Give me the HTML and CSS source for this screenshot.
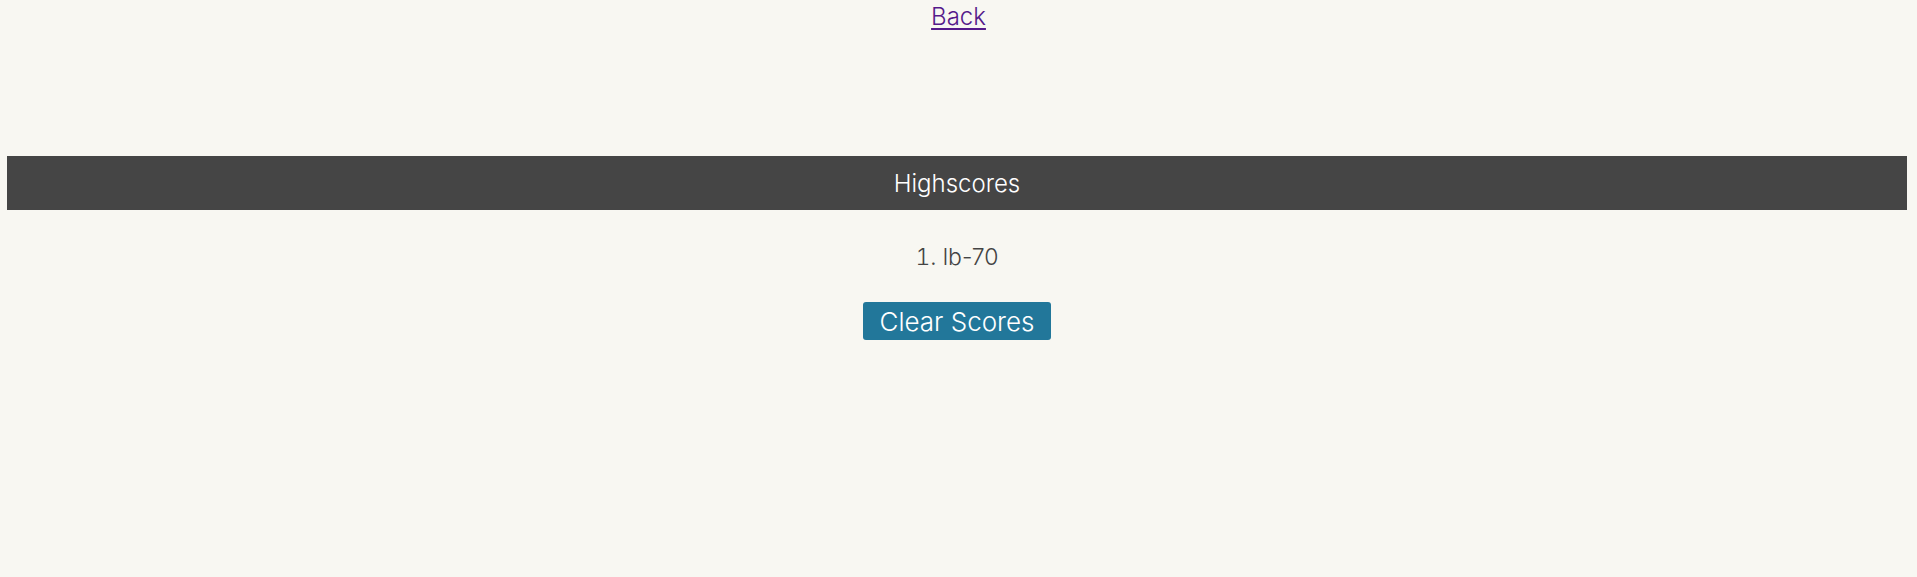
FILE: index.html
```html
<!DOCTYPE html>
<html lang="en">
<head>
<meta charset="utf-8">
<title>Highscores</title>
<link rel="stylesheet" href="styles.css">
</head>
<body>
<header class="top">
  <a class="back" href="#">Back</a>
</header>
<main class="scores">
  <h1 class="bar">Highscores</h1>
  <ol class="list">
    <li>lb-70</li>
  </ol>
  <button class="clear" type="button">Clear Scores</button>
</main>
</body>
</html>
```
FILE: styles.css
```css
html, body {
  margin: 0;
  padding: 0;
  background: #f8f7f2;
  font-family: Inter, "Open Sans", sans-serif;
  font-weight: 300;
}
.top {
  display: flex;
  justify-content: center;
  height: 156px;
}
.back {
  color: #551a8b;
  font-size: 24px;
  line-height: 33px;
  text-decoration-thickness: 2px;
  text-underline-offset: 3px;
}
.scores {
  display: flex;
  flex-direction: column;
  align-items: center;
  padding: 0 10px 0 7px;
}
.bar {
  align-self: stretch;
  margin: 0;
  height: 54px;
  background: #454545;
  color: #fff;
  font-size: 24px;
  font-weight: 300;
  display: flex;
  align-items: center;
  justify-content: center;
}
.list {
  margin: 31px 0 0;
  padding: 0;
  list-style-position: inside;
  font-size: 23px;
  color: #444;
  line-height: 32px;
}
.clear {
  margin-top: 29px;
  width: 188px;
  height: 38px;
  background: #22779a;
  color: #fff;
  border: none;
  border-radius: 3px;
  font-family: inherit;
  font-weight: 300;
  font-size: 26px;
  padding: 0;
}
```
